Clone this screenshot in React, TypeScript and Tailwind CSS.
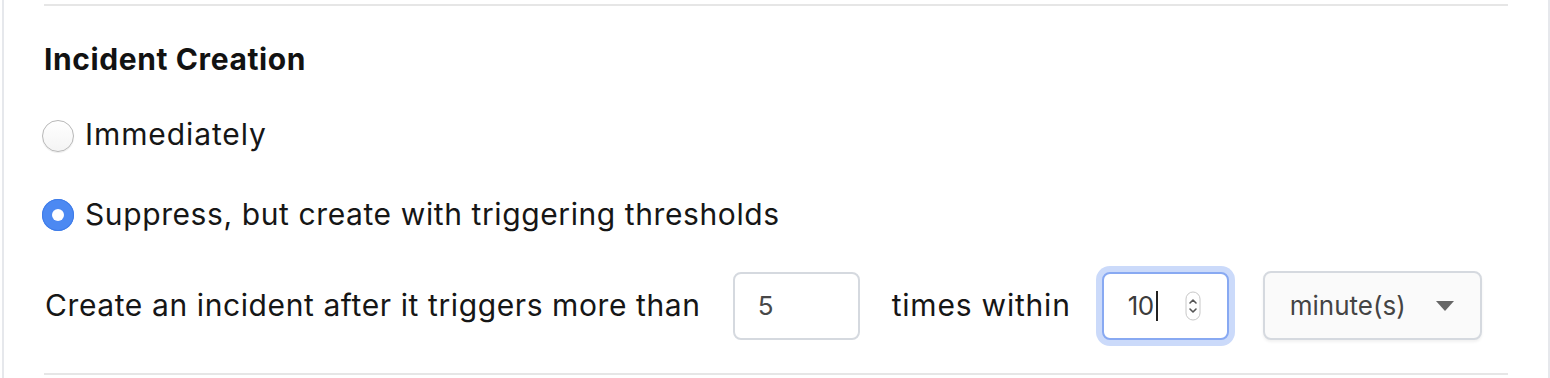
import { useState } from "react"

function Radio({ checked }: { checked: boolean }) {
  if (checked) {
    return (
      <span className="flex h-[32px] w-[32px] shrink-0 items-center justify-center rounded-full bg-[#4c89f2] shadow-[inset_0_0_0_1px_#3f7ce8]">
        <span className="h-[12px] w-[12px] rounded-full bg-white" />
      </span>
    )
  }
  return (
    <span className="h-[32px] w-[32px] shrink-0 rounded-full border-[1.5px] border-[#b8b8b8] bg-gradient-to-b from-white to-[#f4f4f4] shadow-[0_1px_1px_rgba(0,0,0,0.08)]" />
  )
}

function Spinner() {
  return (
    <svg width="16" height="30" viewBox="0 0 16 30" className="shrink-0">
      <rect x="1" y="1" width="14" height="28" rx="7" fill="#fff" stroke="#c8c8c8" strokeWidth="1" />
      <path d="M5 12 L8 9 L11 12" fill="none" stroke="#555" strokeWidth="1.6" strokeLinecap="round" strokeLinejoin="round" />
      <path d="M5 18 L8 21 L11 18" fill="none" stroke="#555" strokeWidth="1.6" strokeLinecap="round" strokeLinejoin="round" />
    </svg>
  )
}

export default function App() {
  const [mode, setMode] = useState<"now" | "suppress">("suppress")

  return (
    <div
      className="ml-[2px] h-[378px] border-x-2 border-[#e6e8ec] bg-white px-10 pt-1 text-[30px] tracking-[0.6px] text-[#161616]"
      style={{ fontFamily: "Inter, 'Noto Sans', sans-serif" }}
    >
      <div className="border-y-2 border-[#e6e6e6] pb-[33px] pt-[35px]">
        <h2 className="text-[30px] font-bold leading-[36px] tracking-[0.6px] text-[#121212]">Incident Creation</h2>

        <div className="mt-[39px] flex flex-col gap-[39px]">
          <label className="-ml-[2px] flex h-[40px] cursor-pointer items-center gap-[11px]" onClick={() => setMode("now")}>
            <Radio checked={mode === "now"} />
            <span className="-mt-[5px] leading-[40px] tracking-[0.9px]">Immediately</span>
          </label>
          <label className="-ml-[2px] flex h-[40px] cursor-pointer items-center gap-[11px]" onClick={() => setMode("suppress")}>
            <Radio checked={mode === "suppress"} />
            <span className="-mt-[3px] leading-[40px]">Suppress, but create with triggering thresholds</span>
          </label>
        </div>

        <div className="mt-[36px] flex items-center">
          <span className="ml-[1px]">Create an incident after it triggers more than</span>
          <div className="ml-[32px] flex h-[68px] w-[127px] items-center rounded-lg border-2 border-[#d5d9df] bg-white pl-[23px] text-[26px] tracking-normal text-[#484848]">
            5
          </div>
          <span className="ml-[32px] tracking-[0.8px]">times within</span>
          <div className="ml-[31px] flex h-[68px] w-[127px] items-center rounded-lg border-2 border-[#88a9f2] bg-white pl-[24px] text-[26px] tracking-[-0.5px] text-[#3c3c3c] shadow-[0_0_0_6px_#cbdafa]">
            <span>10</span>
            <span className="ml-[2px] h-[30px] w-[2px] bg-[#222]" />
            <span className="ml-[27px]">
              <Spinner />
            </span>
          </div>
          <div className="ml-[34px] flex h-[69px] w-[219px] items-center rounded-lg border-2 border-[#d5d9df] bg-[#fafafa] pl-[25px] text-[26px] tracking-normal text-[#444] shadow-[0_2px_3px_rgba(0,0,0,0.06)]">
            <span>minute(s)</span>
            <svg width="18" height="10" viewBox="0 0 18 10" className="ml-[30px]">
              <path d="M0 0 H18 L9 10 Z" fill="#666" />
            </svg>
          </div>
        </div>
      </div>
    </div>
  )
}
